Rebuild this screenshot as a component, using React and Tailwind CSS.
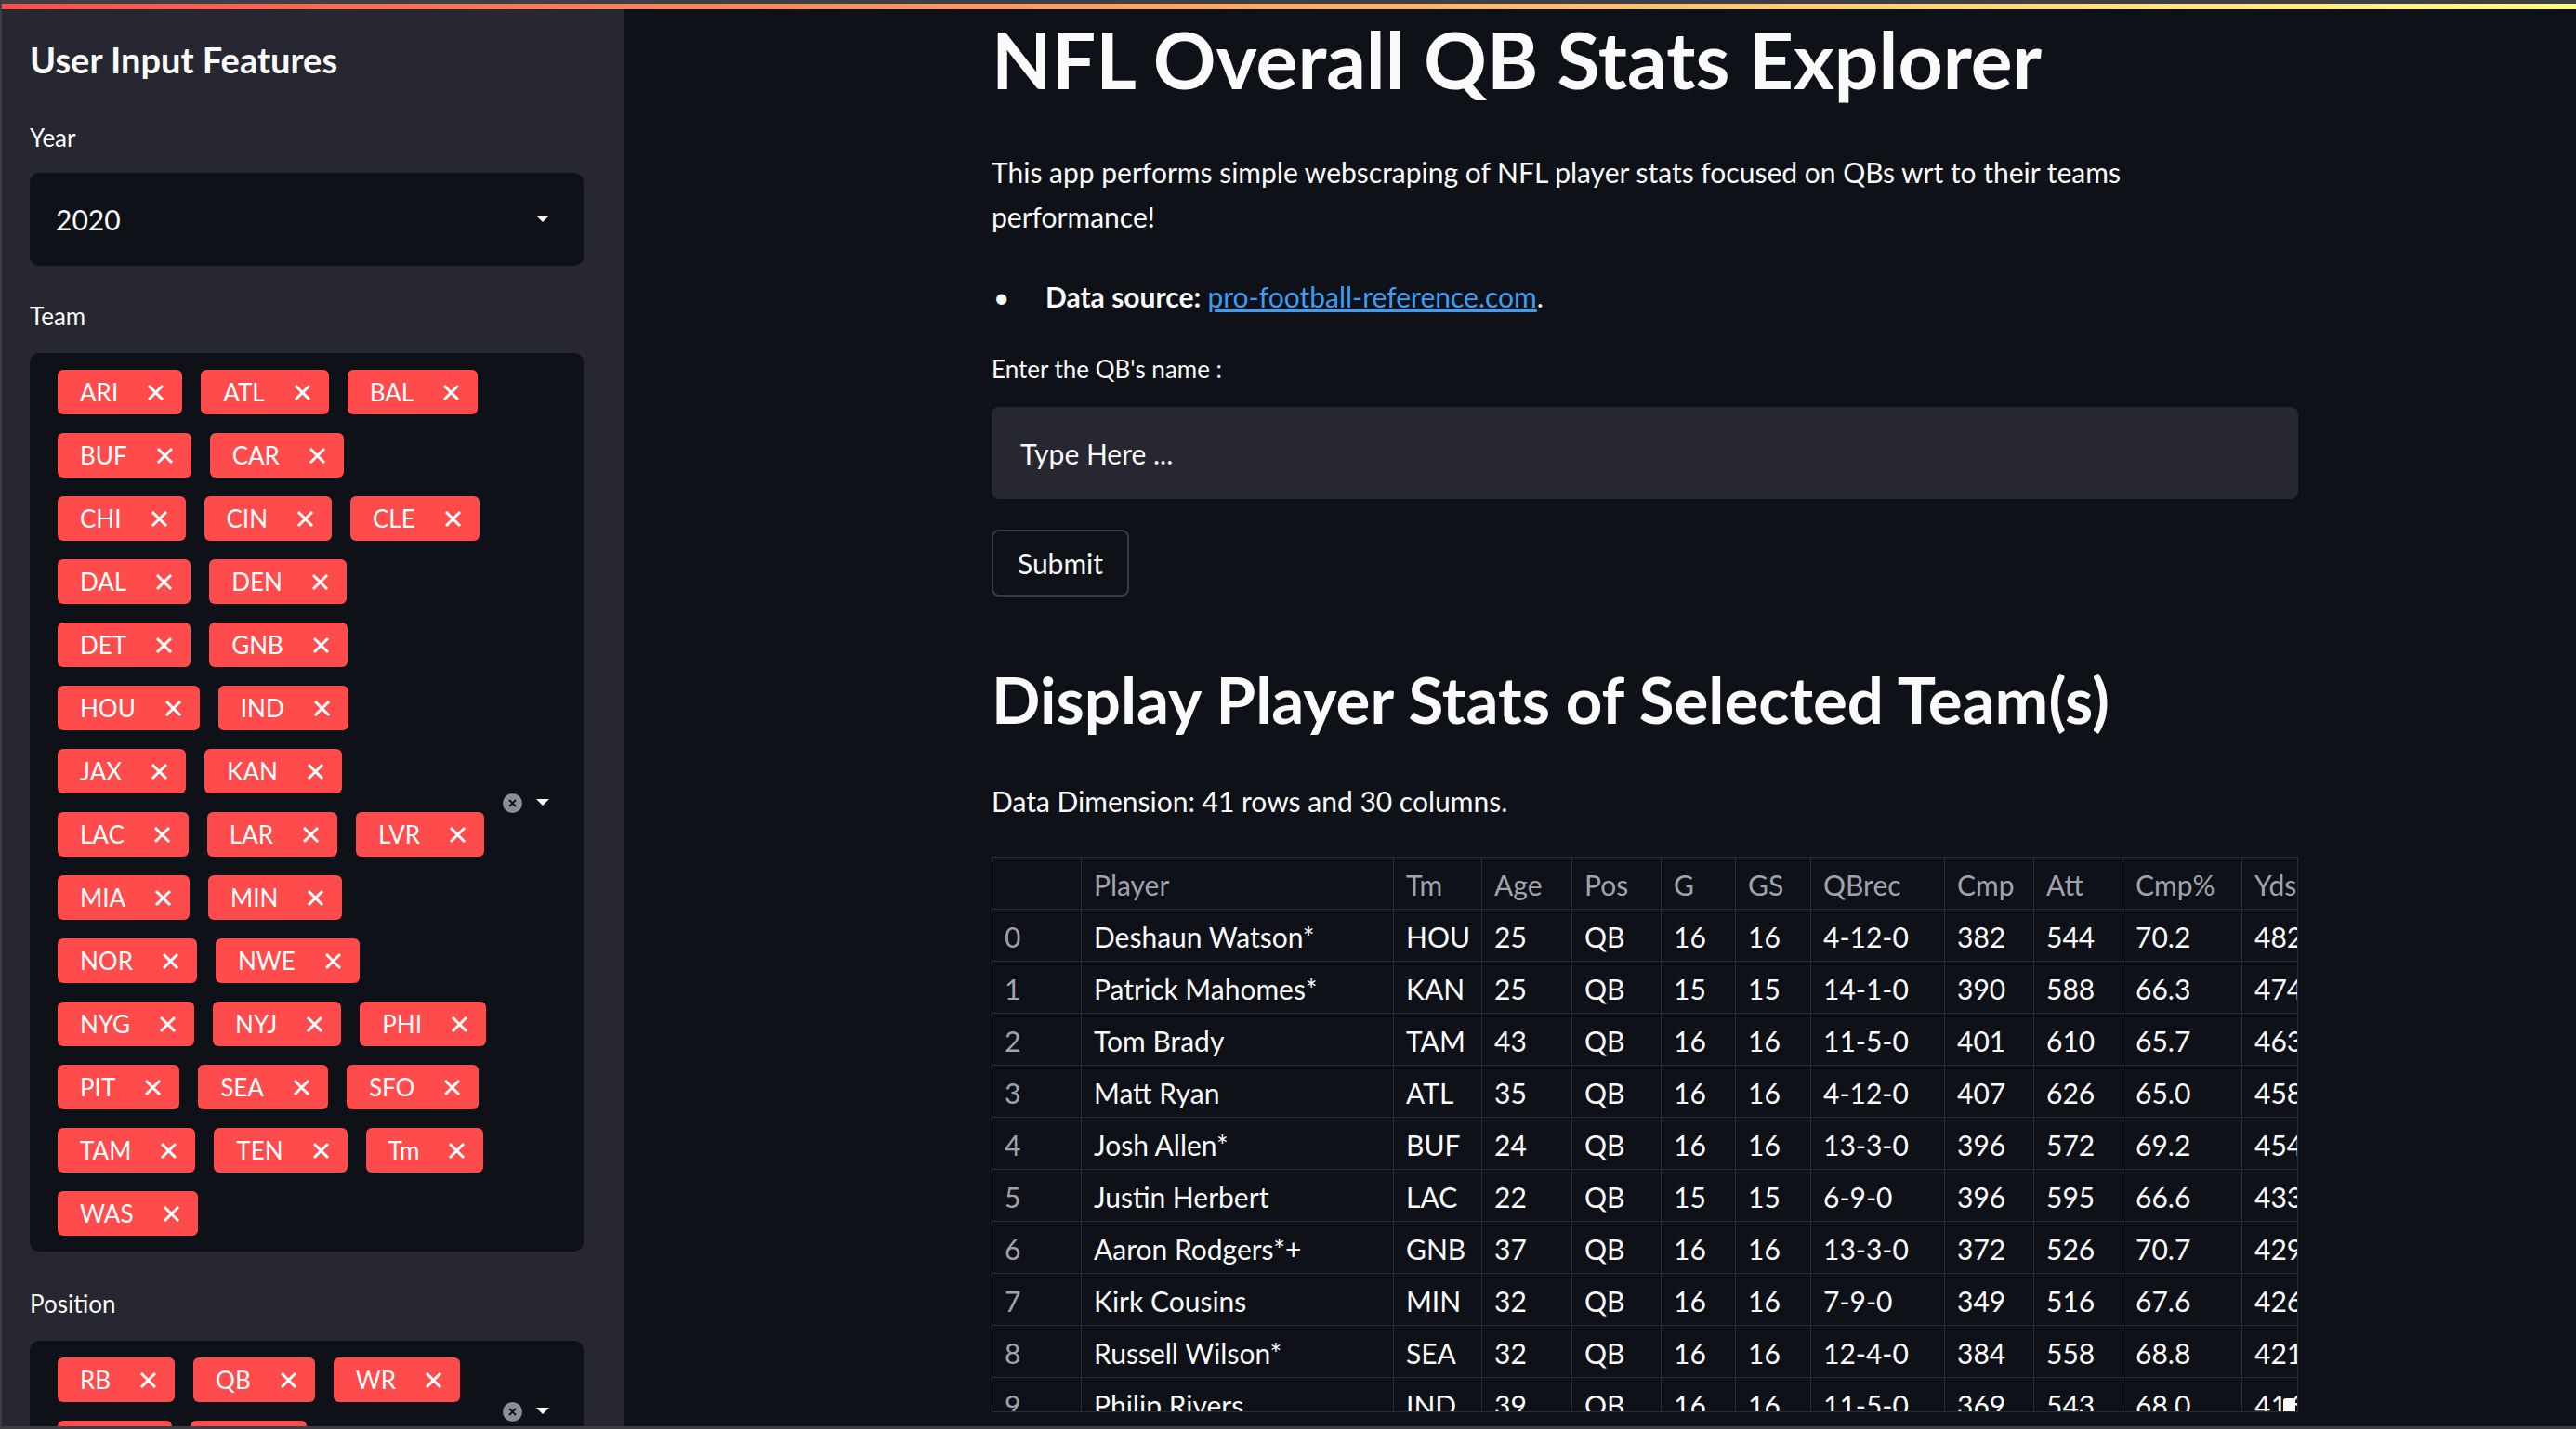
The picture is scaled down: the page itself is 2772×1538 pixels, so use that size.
import React from 'react';

const teamRows = [
    ['ARI', 'ATL', 'BAL'],
    ['BUF', 'CAR'],
    ['CHI', 'CIN', 'CLE'],
    ['DAL', 'DEN'],
    ['DET', 'GNB'],
    ['HOU', 'IND'],
    ['JAX', 'KAN'],
    ['LAC', 'LAR', 'LVR'],
    ['MIA', 'MIN'],
    ['NOR', 'NWE'],
    ['NYG', 'NYJ', 'PHI'],
    ['PIT', 'SEA', 'SFO'],
    ['TAM', 'TEN', 'Tm'],
    ['WAS'],
];

const positionRows = [
    ['RB', 'QB', 'WR'],
    ['TE', 'FB'],
];

const columns = ['', 'Player', 'Tm', 'Age', 'Pos', 'G', 'GS', 'QBrec', 'Cmp', 'Att', 'Cmp%', 'Yds'];

const players = [
    ['Deshaun Watson*', 'HOU', '25', 'QB', '16', '16', '4-12-0', '382', '544', '70.2', '4823'],
    ['Patrick Mahomes*', 'KAN', '25', 'QB', '15', '15', '14-1-0', '390', '588', '66.3', '4740'],
    ['Tom Brady', 'TAM', '43', 'QB', '16', '16', '11-5-0', '401', '610', '65.7', '4633'],
    ['Matt Ryan', 'ATL', '35', 'QB', '16', '16', '4-12-0', '407', '626', '65.0', '4581'],
    ['Josh Allen*', 'BUF', '24', 'QB', '16', '16', '13-3-0', '396', '572', '69.2', '4544'],
    ['Justin Herbert', 'LAC', '22', 'QB', '15', '15', '6-9-0', '396', '595', '66.6', '4336'],
    ['Aaron Rodgers*+', 'GNB', '37', 'QB', '16', '16', '13-3-0', '372', '526', '70.7', '4299'],
    ['Kirk Cousins', 'MIN', '32', 'QB', '16', '16', '7-9-0', '349', '516', '67.6', '4265'],
    ['Russell Wilson*', 'SEA', '32', 'QB', '16', '16', '12-4-0', '384', '558', '68.8', '4212'],
    ['Philip Rivers', 'IND', '39', 'QB', '16', '16', '11-5-0', '369', '543', '68.0', '4169'],
];

const gridCols = 'grid grid-cols-[96px_336px_95px_97px_96px_80px_81px_144px_96px_96px_128px_96px]';

const Caret = () => (
    <svg width="14" height="8" viewBox="0 0 14 8">
        <path d="M0 0 L14 0 L7 7 Z" fill="#fafafa" />
    </svg>
);

const Tag = ({ label }) => (
    <div className="h-[48px] flex items-center rounded-[6px] bg-[#ff4b4b] pl-[24px] pr-[19px] text-white text-[26px]">
        <span className="leading-none">{label}</span>
        <svg className="ml-[31px]" width="19" height="19" viewBox="0 0 19 19">
            <path d="M2 2 L17 17 M17 2 L2 17" stroke="#ffffff" strokeWidth="3" />
        </svg>
    </div>
);

const MultiSelect = ({ rows }) => (
    <div className="mt-[22px] w-[596px] rounded-[10px] bg-[#0e1117] flex items-center pl-[30px] pr-[37px] pt-[18px] pb-[17px]">
        <div className="flex-1 flex flex-col gap-[20px]">
            {rows.map((row, i) => (
                <div key={i} className="flex gap-[20px]">
                    {row.map(t => <Tag key={t} label={t} />)}
                </div>
            ))}
        </div>
        <div className="flex items-center gap-[15px]">
            <div className="w-[21px] h-[21px] rounded-full bg-[#8a8c96] flex items-center justify-center">
                <svg width="9" height="9" viewBox="0 0 9 9">
                    <path d="M1 1 L8 8 M8 1 L1 8" stroke="#0e1117" strokeWidth="1.8" />
                </svg>
            </div>
            <Caret />
        </div>
    </div>
);

const App = () => {
    return (
        <div className="w-[2772px] h-[1538px] overflow-hidden flex flex-col bg-[#0e1117] border-t-4 border-l-2 border-b-[3px] border-[#3d3f44] font-['Lato',sans-serif] text-[#fafafa]">
            <div className="h-[6px] shrink-0 bg-gradient-to-r from-[#ff4b4b] to-[#fffd80]" />

            <div className="flex flex-1 min-h-0">
                {/* Sidebar */}
                <aside className="w-[670px] shrink-0 bg-[#262730] pl-[30px] overflow-hidden">
                    <h2 className="mt-[26px] text-[38px] leading-[56px] font-bold">User Input Features</h2>

                    <div className="mt-[38px] text-[26px] leading-[36px]">Year</div>
                    <div className="mt-[20px] w-[596px] h-[100px] rounded-[10px] bg-[#0e1117] flex items-center justify-between pl-[28px] pr-[37px]">
                        <span className="text-[30px] leading-[36px]">2020</span>
                        <Caret />
                    </div>

                    <div className="mt-[36px] text-[26px] leading-[36px]">Team</div>
                    <MultiSelect rows={teamRows} />

                    <div className="mt-[38px] text-[26px] leading-[36px]">Position</div>
                    <MultiSelect rows={positionRows} />
                </aside>

                {/* Main */}
                <main className="flex-1 pl-[395px]">
                    <div className="w-[1406px]">
                        <h1 className="mt-[4px] text-[84px] leading-[100px] font-bold">NFL Overall QB Stats Explorer</h1>

                        <p className="mt-[47px] text-[30px] leading-[48px]">
                            This app performs simple webscraping of NFL player stats focused on QBs wrt to their teams<br />performance!
                        </p>

                        <div className="mt-[38px] flex text-[30px] leading-[48px]">
                            <span className="w-[58px] pl-[2px]">•</span>
                            <span>
                                <b>Data source: </b>
                                <a className="text-[#3d9df3] underline">pro-football-reference.com</a>.
                            </span>
                        </div>

                        <div className="mt-[36px] text-[26px] leading-[36px]">Enter the QB's name :</div>
                        <div className="mt-[23px] h-[99px] rounded-[8px] bg-[#262730] flex items-center pl-[31px] text-[30px] leading-[36px]">
                            Type Here ...
                        </div>

                        <button className="mt-[33px] w-[148px] h-[72px] rounded-[8px] border-2 border-[#3a3c44] text-[30px] leading-[36px] block">
                            Submit
                        </button>

                        <h2 className="mt-[68px] text-[69px] leading-[86px] font-bold">Display Player Stats of Selected Team(s)</h2>

                        <p className="mt-[42px] text-[30px] leading-[48px]">Data Dimension: 41 rows and 30 columns.</p>

                        <div className="relative mt-[36px] w-[1406px] h-[598px] overflow-hidden border border-[#2b2d35] text-[30px]">
                            <div className={`${gridCols} h-[56px] text-[#a0a3ab]`}>
                                {columns.map((c, i) => (
                                    <div key={i} className="flex items-center pl-[13px] pt-[4px] border-r border-b border-[#2b2d35]">{c}</div>
                                ))}
                            </div>
                            {players.map((row, r) => (
                                <div key={r} className={`${gridCols} h-[56px]`}>
                                    <div className="flex items-center pl-[13px] pt-[4px] border-r border-b border-[#2b2d35] text-[#a0a3ab]">{r}</div>
                                    {row.map((v, i) => (
                                        <div key={i} className="flex items-center pl-[13px] pt-[4px] border-r border-b border-[#2b2d35]">{v}</div>
                                    ))}
                                </div>
                            ))}
                            <div className="absolute right-[2px] bottom-0 w-[13px] h-[14px] rounded-t-[3px] bg-white" />
                        </div>
                    </div>
                </main>
            </div>
        </div>
    );
};

export default App;
